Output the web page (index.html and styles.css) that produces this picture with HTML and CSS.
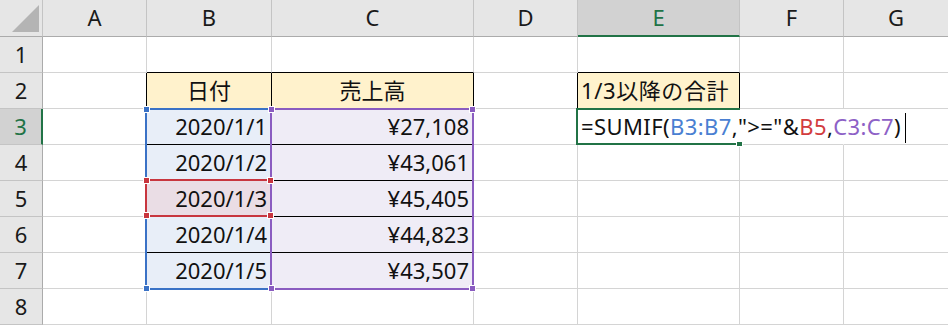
FILE: index.html
```html
<!DOCTYPE html>
<html lang="ja">
<head>
<meta charset="utf-8">
<title>SUMIF</title>
<link rel="stylesheet" href="styles.css">
</head>
<body>
<div class="sheet">
  <!-- header row -->
  <div class="cell hd corner">
    <svg class="tri" width="43" height="37" viewBox="0 0 43 37"><polygon points="12,32 39,32 39,5" fill="#b4b4b4"/></svg>
  </div>
  <div class="cell hd">A</div>
  <div class="cell hd">B</div>
  <div class="cell hd">C</div>
  <div class="cell hd">D</div>
  <div class="cell hd sel-col">E</div>
  <div class="cell hd">F</div>
  <div class="cell hd last">G</div>

  <!-- row 1 -->
  <div class="cell rn">1</div>
  <div class="cell"></div>
  <div class="cell bb"></div>
  <div class="cell bb"></div>
  <div class="cell"></div>
  <div class="cell bb"></div>
  <div class="cell"></div>
  <div class="cell last"></div>

  <!-- row 2 -->
  <div class="cell rn">2</div>
  <div class="cell br"></div>
  <div class="cell yl br bb ctr">日付</div>
  <div class="cell yl br bb ctr">売上高</div>
  <div class="cell br"></div>
  <div class="cell yl br bb left title">1/3以降の合計</div>
  <div class="cell"></div>
  <div class="cell last"></div>

  <!-- row 3 -->
  <div class="cell rn sel-row">3</div>
  <div class="cell br"></div>
  <div class="cell bl-bg br bb num">2020/1/1</div>
  <div class="cell pu-bg br bb num">¥27,108</div>
  <div class="cell"></div>
  <div class="cell nor left formula"><span>=SUMIF(</span><span class="rb">B3:B7</span><span>,"&gt;="&amp;</span><span class="rr">B5</span><span>,</span><span class="rp">C3:C7</span><span>)</span><span class="caret"></span></div>
  <div class="cell nor"></div>
  <div class="cell last"></div>

  <!-- row 4 -->
  <div class="cell rn">4</div>
  <div class="cell br"></div>
  <div class="cell bl-bg br bb num">2020/1/2</div>
  <div class="cell pu-bg br bb num">¥43,061</div>
  <div class="cell"></div>
  <div class="cell"></div>
  <div class="cell"></div>
  <div class="cell last"></div>

  <!-- row 5 -->
  <div class="cell rn">5</div>
  <div class="cell br"></div>
  <div class="cell rd-bg br bb num">2020/1/3</div>
  <div class="cell pu-bg br bb num">¥45,405</div>
  <div class="cell"></div>
  <div class="cell"></div>
  <div class="cell"></div>
  <div class="cell last"></div>

  <!-- row 6 -->
  <div class="cell rn">6</div>
  <div class="cell br"></div>
  <div class="cell bl-bg br bb num">2020/1/4</div>
  <div class="cell pu-bg br bb num">¥44,823</div>
  <div class="cell"></div>
  <div class="cell"></div>
  <div class="cell"></div>
  <div class="cell last"></div>

  <!-- row 7 -->
  <div class="cell rn">7</div>
  <div class="cell br"></div>
  <div class="cell bl-bg br bb num">2020/1/5</div>
  <div class="cell pu-bg br bb num">¥43,507</div>
  <div class="cell"></div>
  <div class="cell"></div>
  <div class="cell"></div>
  <div class="cell last"></div>

  <!-- row 8 -->
  <div class="cell rn">8</div>
  <div class="cell"></div>
  <div class="cell"></div>
  <div class="cell"></div>
  <div class="cell"></div>
  <div class="cell"></div>
  <div class="cell"></div>
  <div class="cell last"></div>

  <!-- reference overlays -->
  <div class="ref ref-blue">
    <span class="hdl hdl-tl h-blue"></span>
    <span class="hdl hdl-bl h-blue"></span>
  </div>
  <div class="ref ref-red">
    <span class="hdl hdl-tl h-red"></span>
    <span class="hdl hdl-tr h-red"></span>
    <span class="hdl hdl-bl h-red"></span>
    <span class="hdl hdl-br h-red"></span>
  </div>
  <div class="ref ref-purple">
    <span class="hdl hdl-tl h-purple"></span>
    <span class="hdl hdl-tr h-purple"></span>
    <span class="hdl hdl-bl h-purple"></span>
    <span class="hdl hdl-br h-purple"></span>
  </div>
  <div class="ref ref-green">
    <span class="fill"></span>
  </div>
</div>
</body>
</html>
```

FILE: styles.css
```css
* { box-sizing: border-box; }

html, body {
  margin: 0;
  padding: 0;
  background: #ffffff;
}

.sheet {
  position: relative;
  display: grid;
  grid-template-columns: 43px 104px 125px 202px 104px 162px 104px 1fr;
  grid-template-rows: 37px repeat(8, 36px);
  width: 948px;
  height: 325px;
  overflow: hidden;
  background: #ffffff;
  font-family: "Noto Sans", "Noto Sans CJK JP", sans-serif;
  font-size: 22px;
  line-height: 22px;
  color: #111111;
}

.cell {
  display: flex;
  align-items: flex-start;
  padding: 6px 4px 0 4px;
  white-space: nowrap;
  border-right: 1px solid #d4d4d4;
  border-bottom: 1px solid #d4d4d4;
  min-width: 0;
}

.cell > * { flex-shrink: 0; }

.cell.last { border-right: none; }

/* headers */
.hd {
  background: #e6e6e6;
  justify-content: center;
  border-right-color: #c4c4c4;
  border-bottom-color: #ababab;
  color: #1a1a1a;
}

.corner {
  position: relative;
  padding: 0;
}

.tri {
  display: block;
}

.rn {
  background: #e6e6e6;
  justify-content: center;
  border-right-color: #ababab;
  border-bottom-color: #c4c4c4;
  color: #1a1a1a;
}

.sel-col {
  background: #d2d2d2;
  color: #217346;
  border-bottom: 2px solid #217346;
}

.sel-row {
  background: #d2d2d2;
  color: #217346;
  border-right: 2px solid #217346;
}

/* table borders */
.bb { border-bottom-color: #000000; }
.br { border-right-color: #000000; }
.nor { border-right-color: transparent; }

.yl { background: #fff2cc; }
.bl-bg { background: #e8eef8; }
.rd-bg { background: #eadde5; }
.pu-bg { background: #efecf6; }

.ctr { justify-content: center; }
.num { justify-content: flex-end; }
.left { justify-content: flex-start; padding-left: 3px; }

.title { letter-spacing: 0.6px; }

.formula {
  overflow: visible;
  position: relative;
  letter-spacing: 0.4px;
}

.rb { color: #4a7fd2; }
.rr { color: #d23c3e; }
.rp { color: #8d61c6; }

.caret {
  display: inline-block;
  width: 1px;
  height: 30px;
  background: #000000;
  margin-left: 4px;
  margin-top: -2px;
}

/* reference range overlays */
.ref {
  position: absolute;
  pointer-events: none;
}

.ref-blue {
  grid-row: 4 / 9;
  grid-column: 3 / 4;
  top: -1px;
  left: -2px;
  right: 0;
  bottom: -1px;
  border: 2px solid #3a72c6;
}

.ref-red {
  grid-row: 6 / 7;
  grid-column: 3 / 4;
  top: -2px;
  left: -2px;
  right: 0;
  bottom: 0;
  border: 2px solid #c8363f;
}

.ref-purple {
  grid-row: 4 / 9;
  grid-column: 4 / 5;
  top: -1px;
  left: -2px;
  right: 0;
  bottom: -1px;
  border: 2px solid #8a5cc0;
}

.ref-green {
  grid-row: 4 / 5;
  grid-column: 6 / 7;
  top: -1px;
  left: -2px;
  right: 0;
  bottom: 0;
  border: 2px solid #217346;
  border-right: none;
}

.hdl {
  position: absolute;
  width: 7px;
  height: 7px;
  border: 1px solid #ffffff;
  z-index: 2;
}

.h-blue { background: #3a72c6; }
.h-red { background: #c8363f; }
.h-purple { background: #8a5cc0; }

.hdl-tl { left: -4px; top: -4px; }
.hdl-tr { right: -4px; top: -4px; }
.hdl-bl { left: -4px; bottom: -4px; }
.hdl-br { right: -4px; bottom: -4px; }

.fill {
  position: absolute;
  right: -3px;
  bottom: -4px;
  width: 7px;
  height: 6px;
  background: #217346;
  border: 1px solid #ffffff;
}
```
